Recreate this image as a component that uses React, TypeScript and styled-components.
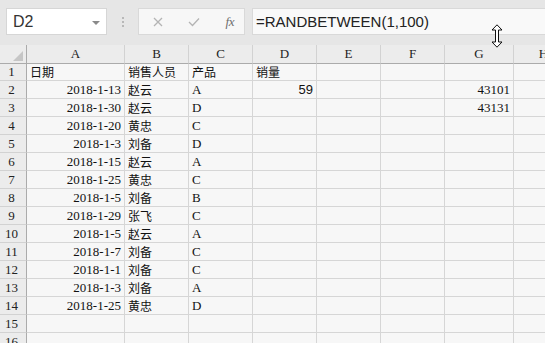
import React from "react";
import styled, { createGlobalStyle } from "styled-components";

const GlobalStyle = createGlobalStyle`
  html, body {
    margin: 0;
    padding: 0;
    overflow: hidden;
    background: #e6e6e6;
  }
`;

const Sheet = styled.div`
  position: relative;
  width: 545px;
  height: 343px;
  overflow: hidden;
  background: #f7f7f7;
`;

const FormulaBar = styled.div`
  height: 45px;
  box-sizing: border-box;
  background: #e6e6e6;
  display: flex;
  align-items: flex-start;
  padding: 8px 0 0 6px;
`;

const NameBox = styled.div`
  width: 101px;
  height: 27px;
  box-sizing: border-box;
  background: #ffffff;
  border: 1px solid #d6d6d6;
  display: flex;
  align-items: center;
  justify-content: space-between;
  padding: 0 6px 0 6px;
  font-family: "Liberation Sans", Arial, sans-serif;
  font-size: 16px;
  color: #333;
`;

const Caret = styled.span`
  width: 0;
  height: 0;
  border-left: 4px solid transparent;
  border-right: 4px solid transparent;
  border-top: 4px solid #8a8a8a;
  margin-top: 2px;
`;

const Separator = styled.div`
  width: 31px;
  height: 27px;
  display: flex;
  flex-direction: column;
  align-items: center;
  justify-content: center;
  gap: 2px;
`;

const Dot = styled.span`
  width: 2px;
  height: 2px;
  background: #b8b8b8;
`;

const FuncBox = styled.div`
  width: 107px;
  height: 27px;
  box-sizing: border-box;
  background: #f7f7f7;
  border: 1px solid #d9d9d9;
  display: flex;
  align-items: center;
  justify-content: space-between;
  padding: 0 10px 0 14px;
`;

const FxLabel = styled.span`
  font-family: "Liberation Serif", "Times New Roman", serif;
  font-style: italic;
  font-size: 13px;
  color: #6e6e6e;
  letter-spacing: -0.5px;
`;

const FormulaInput = styled.div`
  flex: 1;
  margin-left: 7px;
  height: 27px;
  box-sizing: border-box;
  background: #f9f9f9;
  border: 1px solid #d9d9d9;
  border-right: none;
  display: flex;
  align-items: center;
  padding-left: 3px;
  font-family: "Liberation Sans", Arial, sans-serif;
  font-size: 15px;
  color: #222;
`;

const Grid = styled.div`
  display: grid;
  grid-template-columns: 27px 98px 64px 64px 64px 64px 64px 69px 60px;
  grid-auto-rows: 18px;
  grid-template-rows: 18px;
`;

const ColHeader = styled.div`
  background: #ececec;
  border-right: 1px solid #d2d2d2;
  border-bottom: 1px solid #ababab;
  display: flex;
  align-items: center;
  justify-content: center;
  font-family: "Liberation Serif", "Times New Roman", serif;
  font-size: 13px;
  color: #222;
  height: 18px;
  box-sizing: content-box;
  position: relative;
`;

const Corner = styled(ColHeader)`
  border-right: 1px solid #ababab;
`;

const CornerMark = styled.span`
  position: absolute;
  right: 3px;
  bottom: 2px;
  width: 0;
  height: 0;
  border-left: 10px solid transparent;
  border-bottom: 10px solid #c6c6c6;
`;

const RowHeader = styled.div`
  background: #ececec;
  border-right: 1px solid #ababab;
  border-bottom: 1px solid #d2d2d2;
  box-sizing: border-box;
  display: flex;
  align-items: center;
  justify-content: center;
  padding-right: 3px;
  font-family: "Liberation Serif", "Times New Roman", serif;
  font-size: 13px;
  color: #222;
`;

type CellKind = "serif" | "cjk" | "sans";

const fontFor = (kind?: CellKind) => {
  if (kind === "cjk") return `"Noto Sans CJK SC", "Noto Sans", sans-serif`;
  if (kind === "sans") return `"Liberation Sans", Arial, sans-serif`;
  return `"Liberation Serif", "Times New Roman", serif`;
};

const Cell = styled.div<{ $right?: boolean; $kind?: CellKind }>`
  border-right: 1px solid #d6d6d6;
  border-bottom: 1px solid #d6d6d6;
  box-sizing: border-box;
  display: flex;
  align-items: center;
  justify-content: ${(p) => (p.$right ? "flex-end" : "flex-start")};
  padding: 0 3px;
  white-space: nowrap;
  overflow: hidden;
  font-family: ${(p) => fontFor(p.$kind)};
  font-size: ${(p) => (p.$kind === "cjk" ? "12px" : "13px")};
  color: #111;
`;

const Cursor = styled.svg`
  position: absolute;
  left: 491px;
  top: 24px;
`;

const columns = ["A", "B", "C", "D", "E", "F", "G", "H"];

type Row = { date?: string; who?: string; prod?: string; qty?: string; g?: string };

const rows: Row[] = [
  { date: "2018-1-13", who: "赵云", prod: "A", qty: "59", g: "43101" },
  { date: "2018-1-30", who: "赵云", prod: "D", g: "43131" },
  { date: "2018-1-20", who: "黄忠", prod: "C" },
  { date: "2018-1-3", who: "刘备", prod: "D" },
  { date: "2018-1-15", who: "赵云", prod: "A" },
  { date: "2018-1-25", who: "黄忠", prod: "C" },
  { date: "2018-1-5", who: "刘备", prod: "B" },
  { date: "2018-1-29", who: "张飞", prod: "C" },
  { date: "2018-1-5", who: "赵云", prod: "A" },
  { date: "2018-1-7", who: "刘备", prod: "C" },
  { date: "2018-1-1", who: "刘备", prod: "C" },
  { date: "2018-1-3", who: "刘备", prod: "A" },
  { date: "2018-1-25", who: "黄忠", prod: "D" },
  {},
  {},
];

const App = () => {
  return (
    <Sheet>
      <GlobalStyle />
      <FormulaBar>
        <NameBox>
          <span>D2</span>
          <Caret />
        </NameBox>
        <Separator>
          <Dot />
          <Dot />
          <Dot />
        </Separator>
        <FuncBox>
          <svg width="10" height="10" viewBox="0 0 10 10">
            <path d="M1 1 L9 9 M9 1 L1 9" stroke="#b4b4b4" strokeWidth="1.3" />
          </svg>
          <svg width="12" height="10" viewBox="0 0 12 10">
            <path d="M1 5 L4.5 8.5 L11 1.5" stroke="#b4b4b4" strokeWidth="1.3" fill="none" />
          </svg>
          <FxLabel>fx</FxLabel>
        </FuncBox>
        <FormulaInput>=RANDBETWEEN(1,100)</FormulaInput>
      </FormulaBar>

      <Grid>
        <Corner>
          <CornerMark />
        </Corner>
        {columns.map((c) => (
          <ColHeader key={c}>{c}</ColHeader>
        ))}

        <RowHeader>1</RowHeader>
        <Cell $kind="cjk">日期</Cell>
        <Cell $kind="cjk">销售人员</Cell>
        <Cell $kind="cjk">产品</Cell>
        <Cell $kind="cjk">销量</Cell>
        <Cell />
        <Cell />
        <Cell />
        <Cell />

        {rows.map((r, i) => (
          <React.Fragment key={i}>
            <RowHeader>{i + 2}</RowHeader>
            <Cell $right>{r.date}</Cell>
            <Cell $kind="cjk">{r.who}</Cell>
            <Cell>{r.prod}</Cell>
            <Cell $right $kind="sans">{r.qty}</Cell>
            <Cell />
            <Cell />
            <Cell $right>{r.g}</Cell>
            <Cell />
          </React.Fragment>
        ))}
      </Grid>

      <Cursor width="12" height="24" viewBox="0 0 12 24">
        <path
          d="M6 0.8 L11 6 L7.5 6 L7.5 18 L11 18 L6 23.2 L1 18 L4.5 18 L4.5 6 L1 6 Z"
          fill="#ffffff"
          stroke="#111"
          strokeWidth="1"
          strokeLinejoin="miter"
        />
      </Cursor>
    </Sheet>
  );
};

export default App;
